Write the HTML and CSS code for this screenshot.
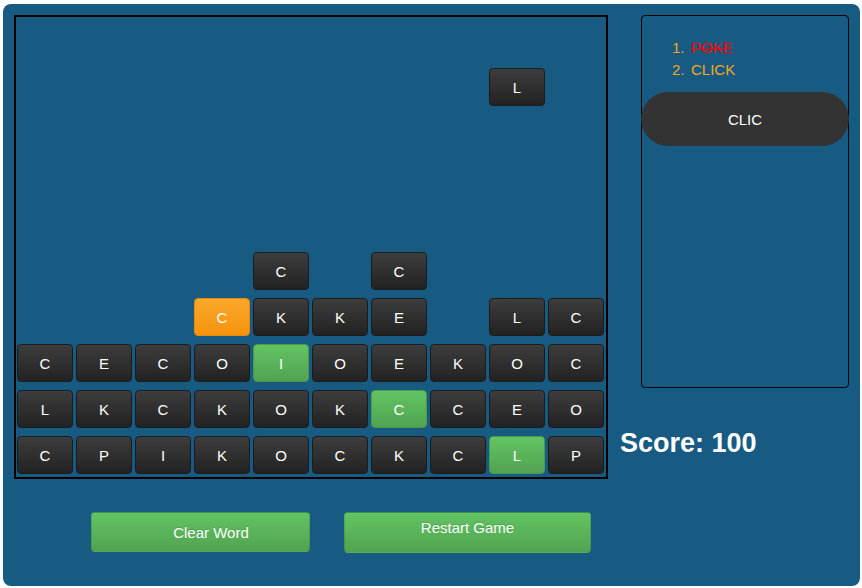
FILE: index.html
```html
<!DOCTYPE html>
<html>
<head>
<meta charset="utf-8">
<link rel="stylesheet" href="styles.css">
</head>
<body>
<div class="game">
  <div class="left">
    <div class="board">
      <div class="row"><span class="cell"></span><span class="cell"></span><span class="cell"></span><span class="cell"></span><span class="cell"></span><span class="cell"></span><span class="cell"></span><span class="cell"></span><span class="cell"></span><span class="cell"></span></div>
      <div class="row"><span class="cell"></span><span class="cell"></span><span class="cell"></span><span class="cell"></span><span class="cell"></span><span class="cell"></span><span class="cell"></span><span class="cell"></span><span class="cell"><b class="tile">L</b></span><span class="cell"></span></div>
      <div class="row"><span class="cell"></span><span class="cell"></span><span class="cell"></span><span class="cell"></span><span class="cell"></span><span class="cell"></span><span class="cell"></span><span class="cell"></span><span class="cell"></span><span class="cell"></span></div>
      <div class="row"><span class="cell"></span><span class="cell"></span><span class="cell"></span><span class="cell"></span><span class="cell"></span><span class="cell"></span><span class="cell"></span><span class="cell"></span><span class="cell"></span><span class="cell"></span></div>
      <div class="row"><span class="cell"></span><span class="cell"></span><span class="cell"></span><span class="cell"></span><span class="cell"></span><span class="cell"></span><span class="cell"></span><span class="cell"></span><span class="cell"></span><span class="cell"></span></div>
      <div class="row"><span class="cell"></span><span class="cell"></span><span class="cell"></span><span class="cell"></span><span class="cell"><b class="tile">C</b></span><span class="cell"></span><span class="cell"><b class="tile">C</b></span><span class="cell"></span><span class="cell"></span><span class="cell"></span></div>
      <div class="row"><span class="cell"></span><span class="cell"></span><span class="cell"></span><span class="cell"><b class="tile orange">C</b></span><span class="cell"><b class="tile">K</b></span><span class="cell"><b class="tile">K</b></span><span class="cell"><b class="tile">E</b></span><span class="cell"></span><span class="cell"><b class="tile">L</b></span><span class="cell"><b class="tile">C</b></span></div>
      <div class="row"><span class="cell"><b class="tile">C</b></span><span class="cell"><b class="tile">E</b></span><span class="cell"><b class="tile">C</b></span><span class="cell"><b class="tile">O</b></span><span class="cell"><b class="tile green">I</b></span><span class="cell"><b class="tile">O</b></span><span class="cell"><b class="tile">E</b></span><span class="cell"><b class="tile">K</b></span><span class="cell"><b class="tile">O</b></span><span class="cell"><b class="tile">C</b></span></div>
      <div class="row"><span class="cell"><b class="tile">L</b></span><span class="cell"><b class="tile">K</b></span><span class="cell"><b class="tile">C</b></span><span class="cell"><b class="tile">K</b></span><span class="cell"><b class="tile">O</b></span><span class="cell"><b class="tile">K</b></span><span class="cell"><b class="tile green">C</b></span><span class="cell"><b class="tile">C</b></span><span class="cell"><b class="tile">E</b></span><span class="cell"><b class="tile">O</b></span></div>
      <div class="row"><span class="cell"><b class="tile">C</b></span><span class="cell"><b class="tile">P</b></span><span class="cell"><b class="tile">I</b></span><span class="cell"><b class="tile">K</b></span><span class="cell"><b class="tile">O</b></span><span class="cell"><b class="tile">C</b></span><span class="cell"><b class="tile">K</b></span><span class="cell"><b class="tile">C</b></span><span class="cell"><b class="tile green">L</b></span><span class="cell"><b class="tile">P</b></span></div>
    </div>
    <div class="actions">
      <button class="btn btn-clear">Clear Word</button>
      <button class="btn btn-restart">Restart Game</button>
    </div>
  </div>
  <div class="right">
    <div class="words">
      <ol class="word-list">
        <li class="found"><span>POKE</span></li>
        <li><span>CLICK</span></li>
      </ol>
      <div class="current">CLIC</div>
    </div>
    <div class="score">Score: 100</div>
  </div>
</div>
</body>
</html>
```

FILE: styles.css
```css
html, body {
  margin: 0;
  padding: 0;
  background: #ffffff;
}
body {
  padding: 4px 2px 2px 3px;
  font-family: "Liberation Sans", Arial, sans-serif;
}
.game {
  width: 857px;
  height: 582px;
  box-sizing: border-box;
  background: #175a82;
  border-radius: 8px;
  padding: 11px 0 0 11px;
  display: flex;
  align-items: flex-start;
}
.left {
  display: flex;
  flex-direction: column;
}
.board {
  width: 590px;
  height: 460px;
  border: 2px solid #000;
  display: flex;
  flex-direction: column;
}
.row {
  display: flex;
  height: 46px;
}
.cell {
  width: 59px;
  height: 46px;
  box-sizing: border-box;
  padding: 5px 2px 3px 1px;
  display: flex;
}
.tile {
  flex: 1;
  display: flex;
  align-items: center;
  justify-content: center;
  box-sizing: border-box;
  border: 1px solid #1c1c1c;
  border-radius: 4px;
  background: linear-gradient(#3d3d3d, #222222);
  color: #fff;
  font-weight: normal;
  font-size: 15px;
}
.tile.orange {
  background: linear-gradient(#fba82c, #f6930c);
  border-color: #e8890a;
}
.tile.green {
  background: linear-gradient(#62c462, #51a351);
  border-color: #4a9a4a;
}
.actions {
  display: flex;
  margin-top: 33px;
  padding-left: 77px;
  gap: 34px;
  align-items: flex-start;
}
.btn {
  font-family: "Liberation Sans", Arial, sans-serif;
  font-size: 15px;
  color: #fff;
  text-shadow: 0 -1px 0 rgba(0,0,0,0.15);
  background: linear-gradient(#62c462, #51a351);
  border: 1px solid rgba(0,0,0,0.12);
  border-radius: 4px;
  box-sizing: border-box;
  padding: 0;
}
.btn-clear {
  width: 219px;
  height: 40px;
  padding-left: 21px;
}
.btn-restart {
  width: 247px;
  height: 41px;
  padding-bottom: 10px;
}
.right {
  margin-left: 12px;
  display: flex;
  flex-direction: column;
}
.words {
  margin-left: 21px;
  width: 208px;
  height: 373px;
  box-sizing: border-box;
  border: 1px solid #000;
  border-radius: 4px;
}
.word-list {
  margin: 21px 0 0 0;
  padding: 0 0 0 30px;
  list-style: none;
  counter-reset: word;
  color: #f5a623;
  font-size: 15px;
  line-height: 22px;
}
.word-list li {
  counter-increment: word;
}
.word-list li::before {
  content: counter(word) ".";
  display: inline-block;
  width: 19px;
  color: #f5a623;
}
.word-list .found span {
  color: #ff0000;
  text-decoration: line-through;
}
.current {
  margin: 11px -1px 0 -1px;
  height: 54px;
  border-radius: 27px;
  background: #333333;
  color: #fff;
  font-size: 15px;
  display: flex;
  align-items: center;
  justify-content: center;
}
.score {
  margin-top: 40px;
  color: #fff;
  font-weight: bold;
  font-size: 27px;
}
```
